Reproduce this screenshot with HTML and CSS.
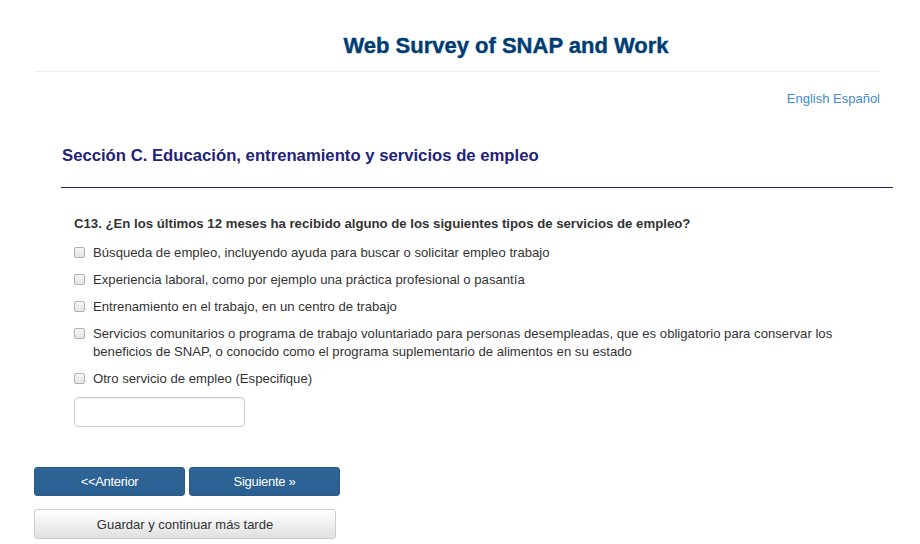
FILE: index.html
```html
<!DOCTYPE html>
<html lang="es">
<head>
    <meta charset="UTF-8">
    <meta name="viewport" content="width=device-width, initial-scale=1.0">
    <title>Web Survey of SNAP and Work</title>
    <link rel="stylesheet" href="styles.css">
</head>
<body>
    <div class="pagina">
        <div class="encabezado">
            <h1 class="titulo">Web Survey of SNAP and Work</h1>
        </div>
        <div class="idiomas">
            <a href="#">English</a> <a href="#">Español</a>
        </div>
        <div class="seccion">
            <h2>Sección C. Educación, entrenamiento y servicios de empleo</h2>
        </div>
        <form class="pregunta">
            <p class="enunciado">C13. ¿En los últimos 12 meses ha recibido alguno de los siguientes tipos de servicios de empleo?</p>
            <label class="opcion"><input type="checkbox"><span>Búsqueda de empleo, incluyendo ayuda para buscar o solicitar empleo trabajo</span></label>
            <label class="opcion"><input type="checkbox"><span>Experiencia laboral, como por ejemplo una práctica profesional o pasantía</span></label>
            <label class="opcion"><input type="checkbox"><span>Entrenamiento en el trabajo, en un centro de trabajo</span></label>
            <label class="opcion"><input type="checkbox"><span>Servicios comunitarios o programa de trabajo voluntariado para personas desempleadas, que es obligatorio para conservar los beneficios de SNAP, o conocido como el programa suplementario de alimentos en su estado</span></label>
            <label class="opcion"><input type="checkbox"><span>Otro servicio de empleo (Especifique)</span></label>
            <input type="text" class="especifique">
        </form>
        <div class="botones">
            <div class="fila">
                <button class="btn azul">&lt;&lt;Anterior</button>
                <button class="btn azul">Siguiente »</button>
            </div>
            <button class="btn gris">Guardar y continuar más tarde</button>
        </div>
    </div>
</body>
</html>
```

FILE: styles.css
```css
body {
    margin: 0;
    font-family: 'Liberation Sans', Arial, sans-serif;
    font-size: 13px;
    color: #333;
    background: #fff;
}
.pagina {
    width: 846px;
    margin-left: 34px;
}
.encabezado {
    height: 72px;
    border-bottom: 1px solid #eee;
    box-sizing: border-box;
    padding-top: 33px;
    padding-left: 98px;
    text-align: center;
}
.titulo {
    margin: 0;
    font-size: 22px;
    line-height: 26px;
    font-weight: bold;
    color: #003d73;
    -webkit-text-stroke: 0.4px #003d73;
}
.idiomas {
    text-align: right;
    padding-top: 19px;
    line-height: 16px;
}
.idiomas a {
    color: #428bca;
    text-decoration: none;
}
.seccion {
    margin-left: 27px;
    width: 832px;
    border-bottom: 1px solid #23235e;
    padding-top: 39px;
    padding-bottom: 21px;
}
.seccion h2 {
    margin: 0 0 0 1px;
    font-size: 16.7px;
    line-height: 20px;
    color: #22227a;
}
.pregunta {
    padding-left: 40px;
    padding-top: 27px;
}
.enunciado {
    margin: 0 0 11px 0;
    font-weight: bold;
    font-size: 13.2px;
    line-height: 18px;
}
.opcion {
    display: flex;
    align-items: flex-start;
    gap: 8px;
    font-size: 13.15px;
    line-height: 18px;
    margin-bottom: 9px;
    padding-right: 20px;
}
.opcion input {
    appearance: none;
    -webkit-appearance: none;
    flex: none;
    width: 11px;
    height: 11px;
    margin: 3px 0 0 0;
    border: 1px solid #b0b0b0;
    border-radius: 2px;
    background: linear-gradient(#f5f5f5, #e4e4e4);
}
.opcion span {
    flex: 1;
}
.especifique {
    display: block;
    margin-top: 8px;
    width: 171px;
    height: 30px;
    box-sizing: border-box;
    border: 1px solid #ccc;
    border-radius: 4px;
    box-shadow: inset 0 1px 1px rgba(0,0,0,0.075);
}
.botones {
    padding-top: 40px;
    display: flex;
    flex-direction: column;
    gap: 13px;
}
.fila {
    display: flex;
    gap: 4px;
}
.btn {
    font-family: 'Liberation Sans', Arial, sans-serif;
    font-size: 13px;
    border-radius: 3px;
    cursor: pointer;
}
.azul {
    width: 151px;
    height: 29px;
    color: #fff;
    border: 1px solid #265a88;
    background: linear-gradient(#2e6497, #2a5f90);
    letter-spacing: -0.3px;
}
.gris {
    width: 302px;
    height: 30px;
    color: #333;
    border: 1px solid #ccc;
    background: linear-gradient(#fff, #e0e0e0);
}
```
